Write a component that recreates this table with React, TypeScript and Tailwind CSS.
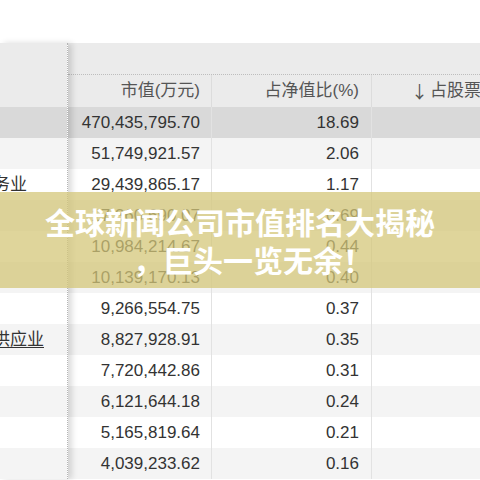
import React from "react";

type Row = {
  name: string;
  value: string;
  ratio: string;
  link?: boolean;
};

const rows: Row[] = [
  { name: "", value: "470,435,795.70", ratio: "18.69" },
  { name: "", value: "51,749,921.57", ratio: "2.06" },
  { name: "信息传输、软件和信息技术服务业", value: "29,439,865.17", ratio: "1.17" },
  { name: "", value: "17,360,690.07", ratio: "0.69" },
  { name: "", value: "10,984,214.67", ratio: "0.44" },
  { name: "", value: "10,139,170.13", ratio: "0.40" },
  { name: "", value: "9,266,554.75", ratio: "0.37" },
  { name: "电力、热力、燃气及水生产和供应业", value: "8,827,928.91", ratio: "0.35", link: true },
  { name: "", value: "7,720,442.86", ratio: "0.31" },
  { name: "", value: "6,121,644.18", ratio: "0.24" },
  { name: "", value: "5,165,819.64", ratio: "0.21" },
  { name: "", value: "4,039,233.62", ratio: "0.16" },
];

const App: React.FC = () => {
  return (
    <div
      className="relative w-[480px] h-[480px] overflow-hidden bg-white text-[17px] text-[#333]"
      style={{ fontFamily: '"Liberation Sans", "Noto Sans CJK SC", sans-serif' }}
    >
      <div className="h-[43px] bg-white" />

      {/* table */}
      <div className="flex w-[700px]">
        {/* frozen first column */}
        <div className="w-[68px] shrink-0 border-r border-dotted border-[#b5b5b5] shadow-[4px_0_6px_rgba(0,0,0,0.14)] relative z-10">
          <div className="h-[64px] bg-[#ebebeb]" />
          {rows.map((r, i) => (
            <div
              key={i}
              className={`h-[31px] flex items-center justify-end overflow-hidden whitespace-nowrap ${
                i === 0 ? "bg-[#d9d9d9]" : i % 2 === 1 ? "bg-[#f4f4f4]" : "bg-white"
              } ${r.link ? "pr-[23px]" : "pr-[40px]"}`}
            >
              <span className={r.link ? "underline underline-offset-2" : ""}>{r.name}</span>
            </div>
          ))}
        </div>

        {/* scrolling columns */}
        <div className="flex-1">
          <div className="h-[32px] bg-[#ebebeb] border-b border-dotted border-[#bdbdbd]" />
          <div className="h-[32px] bg-[#ebebeb] flex text-[#555]">
            <div className="w-[144px] flex items-center justify-end pr-[11px] border-r border-[#dcdcdc]">
              市值(万元)
            </div>
            <div className="w-[160px] flex items-center justify-end pr-[12px] border-r border-[#dcdcdc]">
              占净值比(%)
            </div>
            <div className="flex-1 flex items-center pl-[39px] whitespace-nowrap">
              <span style={{ fontFamily: '"Noto Sans CJK SC", sans-serif' }} className="mr-[2px]">
                ↓
              </span>
              占股票市值比(%)
            </div>
          </div>
          {rows.map((r, i) => (
            <div
              key={i}
              className={`h-[31px] flex ${
                i === 0 ? "bg-[#d9d9d9]" : i % 2 === 1 ? "bg-[#f4f4f4]" : "bg-white"
              }`}
            >
              <div className="w-[144px] flex items-center justify-end pr-[11px] border-r border-[#e2e2e2]">
                {r.value}
              </div>
              <div className="w-[160px] flex items-center justify-end pr-[12px] border-r border-[#e2e2e2]">
                {r.ratio}
              </div>
              <div className="flex-1" />
            </div>
          ))}
        </div>
      </div>

      {/* title banner over the table */}
      <div className="absolute left-0 top-[192px] w-full h-[96px] bg-[rgba(212,198,120,0.74)] z-20 flex flex-col items-center justify-center">
        <div
          className="text-white font-bold text-[30px] leading-[38px] whitespace-nowrap"
          style={{ fontFamily: '"Noto Sans CJK SC", "Liberation Sans", sans-serif' }}
        >
          全球新闻公司市值排名大揭秘
        </div>
        <div
          className="text-white font-bold text-[30px] leading-[38px] whitespace-nowrap pl-[26px]"
          style={{ fontFamily: '"Noto Sans CJK SC", "Liberation Sans", sans-serif' }}
        >
          ，巨头一览无余！
        </div>
      </div>
    </div>
  );
};

export default App;
